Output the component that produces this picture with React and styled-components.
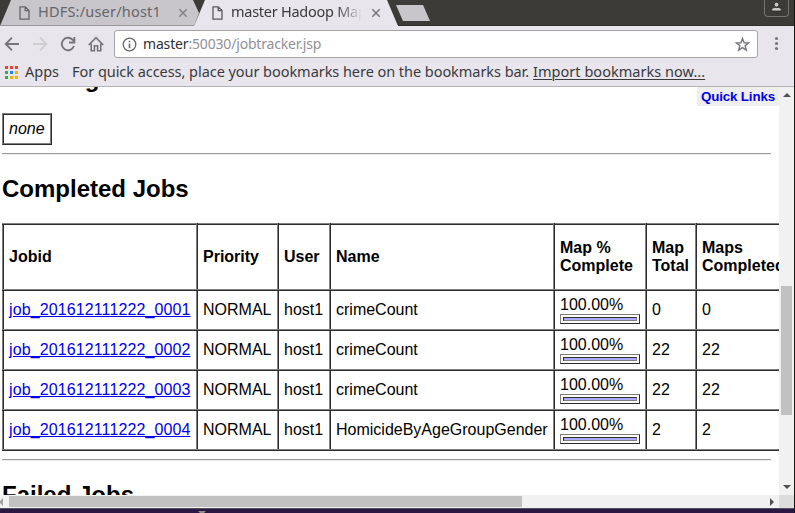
import React from 'react';
import styled, { createGlobalStyle } from 'styled-components';

const Global = createGlobalStyle`
  * { box-sizing: border-box; }
  html, body { margin: 0; height: 513px; overflow: hidden; background: #2a1745; }
  svg { flex: none; }
`;

const Window = styled.div`
  width: 795px;
  height: 513px;
  display: flex;
  flex-direction: column;
  overflow: hidden;
  border-right: 1px solid #16150f;
  font-family: 'Noto Sans', 'Open Sans', sans-serif;
  color: #3a3a3d;
`;

const TabStrip = styled.div`
  height: 26px;
  flex: none;
  display: flex;
  align-items: flex-start;
  background: #3c3b37;
  border-bottom: 1px solid #2f2e2a;
`;

const Tab = styled.div`
  height: 26px;
  flex: none;
  width: ${(p) => (p.$active ? 204 : 200)}px;
  margin-left: ${(p) => (p.$active ? -6 : 0)}px;
  padding-left: ${(p) => (p.$active ? 18 : 19)}px;
  display: flex;
  align-items: center;
  background: ${(p) => (p.$active ? '#e8e5ec' : '#c8c6cb')};
  border-bottom: 1px solid ${(p) => (p.$active ? '#e8e5ec' : '#99979c')};
  color: ${(p) => (p.$active ? '#3a3a3d' : '#66656a')};
  clip-path: ${(p) =>
    p.$active
      ? 'polygon(11px 0, 193px 0, 204px 26px, 0 26px)'
      : 'polygon(11px 0, 193px 0, 199px 13px, 194px 26px, 0 26px)'};
`;

const TabTitle = styled.span`
  width: ${(p) => (p.$fade ? 132 : 131)}px;
  margin-left: 8px;
  padding-bottom: 3px;
  flex: none;
  overflow: hidden;
  white-space: nowrap;
  font-size: 14.5px;
  line-height: 20px;
  letter-spacing: ${(p) => p.$spacing}px;
  mask-image: ${(p) => (p.$fade ? 'linear-gradient(90deg, #000 106px, transparent 131px)' : 'none')};
`;

const TabClose = styled.svg`
  margin-left: ${(p) => p.$gap}px;
`;

const NewTab = styled.div`
  width: 34px;
  height: 16px;
  margin: 5px 0 0 -2px;
  background: #c8c6cb;
  clip-path: polygon(0 0, 27px 0, 34px 16px, 7px 16px);
`;

const Profile = styled.div`
  width: 25px;
  height: 17px;
  margin-left: auto;
  margin-right: 5px;
  display: flex;
  justify-content: center;
  border: 1px solid #75736d;
  border-top: 0;
  border-radius: 0 0 4px 4px;
`;

const Toolbar = styled.div`
  height: 35px;
  flex: none;
  display: flex;
  align-items: center;
  padding-left: 4px;
  background: #e8e5ec;
`;

const NavIcon = styled.svg`
  width: 16px;
  height: 16px;
  margin-right: 12px;
  fill: none;
  stroke: ${(p) => (p.$off ? '#cfcdd2' : '#77757a')};
  stroke-width: 1.9;
`;

const AddressBar = styled.div`
  width: 644px;
  height: 28px;
  margin-left: -2px;
  margin-top: 1px;
  padding: 0 7px;
  display: flex;
  align-items: center;
  background: #fff;
  border: 1px solid #a5a3a8;
  border-radius: 3px;
`;

const Url = styled.span`
  margin-left: 6px;
  flex: 1;
  font-size: 14px;
  line-height: 20px;
  letter-spacing: -0.17px;
  color: #929095;
  b { font-weight: 400; color: #303033; }
`;

const MenuIcon = styled.svg`
  margin-left: 13px;
`;

const Bookmarks = styled.div`
  height: 26px;
  flex: none;
  display: flex;
  align-items: center;
  padding: 0 0 3px 5px;
  background: #e8e5ec;
  border-bottom: 1px solid #b5b3b8;
  font-size: 14.5px;
  line-height: 20px;
  white-space: nowrap;
`;

const BarText = styled.span`
  margin-left: ${(p) => p.$gap}px;
  padding-bottom: 2px;
  letter-spacing: ${(p) => p.$spacing}px;
`;

const ImportLink = styled(BarText)`
  text-decoration: underline;
  text-decoration-thickness: 1px;
  text-underline-offset: 2px;
`;

const Viewport = styled.div`
  height: 408px;
  flex: none;
  display: flex;
`;

const Page = styled.main`
  width: 779px;
  height: 408px;
  position: relative;
  overflow: hidden;
  padding-left: 2px;
  background: #fff;
  color: #000;
  font-family: 'Liberation Sans', Arial, sans-serif;
  font-size: 16px;
  line-height: 18px;
`;

const Heading = styled.h2`
  height: 28px;
  margin: ${(p) => p.$top}px 0 ${(p) => p.$bottom}px;
  font-size: 24px;
  line-height: 28px;
  font-weight: 700;
`;

const QuickLinks = styled.div`
  position: absolute;
  top: 0;
  right: 0;
  width: 82px;
  height: 19px;
  padding-left: 4px;
  background: #eee;
  color: #00e;
  font-size: 13.33px;
  font-weight: 700;
  letter-spacing: -0.15px;
  line-height: 19px;
`;

const EmptyBox = styled.div`
  width: 50px;
  height: 32px;
  padding: 5px;
  border: 2px ridge #808080;
  font-style: italic;
`;

const Rule = styled.hr`
  width: 769px;
  height: 2px;
  margin: ${(p) => p.$top}px 0 0;
  border: 0;
  border-top: 1px solid #9a9a9a;
  border-bottom: 1px solid #eee;
`;

const JobTable = styled.table`
  width: 787px;
  table-layout: fixed;
  border-collapse: collapse;
`;

const Col = styled.col`
  width: ${(p) => p.$w}px;
`;

const Cell = styled.td`
  height: 40px;
  padding: 0 5px;
  border: 2px ridge #808080;
  text-align: left;
  vertical-align: middle;
  white-space: nowrap;
`;

const HeadCell = styled(Cell).attrs({ as: 'th' })`
  height: 66px;
  white-space: pre-line;
`;

const JobLink = styled.a`
  color: #00e;
  letter-spacing: 0.11px;
  text-decoration: underline;
`;

const Meter = styled.div`
  width: 80px;
  height: 10px;
  padding: 2px;
  border: 1px solid;
  border-color: #808080 #2c2c2c #2c2c2c #808080;
`;

const MeterFill = styled.div`
  height: 4px;
  background: #aaf;
  border: 1px solid;
  border-color: #2c2c2c #808080 #808080 #2c2c2c;
`;

const VScroll = styled.div`
  width: 15px;
  height: 408px;
  display: flex;
  flex-direction: column;
  align-items: center;
  background: #f1f1f1;
`;

const VThumb = styled.div`
  width: 11px;
  height: 129px;
  margin-top: 186px;
  margin-bottom: auto;
  background: #c1c1c1;
`;

const HScroll = styled.div`
  height: 13px;
  flex: none;
  display: flex;
  align-items: center;
  background: #f1f1f1;
`;

const HThumb = styled.div`
  width: 513px;
  height: 11px;
  margin-left: 6px;
  margin-right: auto;
  background: #c1c1c1;
`;

const Corner = styled.div`
  width: 15px;
  height: 13px;
  margin-left: 4px;
  background: #dcdcdc;
`;

const Desktop = styled.div`
  flex: 1;
  padding-left: 198px;
  line-height: 0;
  background: #2a1745;
  border-top: 1px solid #55515c;
`;

const PageIcon = ({ color }) => (
  <svg width="11" height="14" viewBox="0 0 11 14" fill="none" stroke={color} strokeWidth="1.3">
    <path d="M1 .8h5.3L10 4.5v8.7H1zM6.2 1v3.7H10" />
  </svg>
);

const CloseIcon = ({ gap, color }) => (
  <TabClose $gap={gap} width="10" height="10" viewBox="0 0 10 10" fill="none" stroke={color} strokeWidth="1.5">
    <path d="M1.3 1.3l7.4 7.4M8.7 1.3L1.3 8.7" />
  </TabClose>
);

const appColors = ['#ea4335', '#ea4335', '#ea4335', '#34a853', '#1e88f5', '#f5b400', '#34a853', '#f5b400', '#f5b400'];
const AppsIcon = () => (
  <svg width="13" height="13" viewBox="0 0 13 13">
    {appColors.map((c, i) => (
      <rect key={i} x={(i % 3) * 5} y={Math.floor(i / 3) * 5} width="3" height="3" fill={c} />
    ))}
  </svg>
);

const Arrow = ({ d, w = 8, h = 8, color = '#505050' }) => (
  <svg width={w} height={h} viewBox={`0 0 ${w} ${h}`} fill={color}>
    <path d={d} />
  </svg>
);

const columns = [194, 81, 52, 224, 92, 50, 92];
const headers = ['Jobid', 'Priority', 'User', 'Name', 'Map %\nComplete', 'Map\nTotal', 'Maps\nCompleted'];
const jobs = [
  ['job_201612111222_0001', 'crimeCount', 0],
  ['job_201612111222_0002', 'crimeCount', 22],
  ['job_201612111222_0003', 'crimeCount', 22],
  ['job_201612111222_0004', 'HomicideByAgeGroupGender', 2],
];

const JobRow = ({ id, name, maps }) => (
  <tr>
    <Cell><JobLink>{id}</JobLink></Cell>
    <Cell>NORMAL</Cell>
    <Cell>host1</Cell>
    <Cell>{name}</Cell>
    <Cell>
      100.00%
      <Meter><MeterFill /></Meter>
    </Cell>
    <Cell>{maps}</Cell>
    <Cell>{maps}</Cell>
  </tr>
);

export default function App() {
  return (
    <>
      <Global />
      <Window>
        <TabStrip>
          <Tab>
            <PageIcon color="#66656a" />
            <TabTitle $spacing={0.2}>HDFS:/user/host1</TabTitle>
            <CloseIcon gap={9} color="#858388" />
          </Tab>
          <Tab $active>
            <PageIcon color="#5a595e" />
            <TabTitle $fade $spacing={-0.26}>master Hadoop Map/Reduce</TabTitle>
            <CloseIcon gap={8} color="#77757a" />
          </Tab>
          <NewTab />
          <Profile>
            <svg width="11" height="12" viewBox="0 0 11 12" fill="#c9c8c5" stroke="#1f1e1b" strokeWidth=".7">
              <circle cx="5.5" cy="4.7" r="2.4" />
              <path d="M.8 11V9.3Q1 7.5 3.6 7.5h3.8q2.6 0 2.8 1.8V11z" />
            </svg>
          </Profile>
        </TabStrip>
        <Toolbar>
          <NavIcon viewBox="0 0 16 16"><path d="M15 8H2M8 1.7L1.7 8 8 14.3" /></NavIcon>
          <NavIcon viewBox="0 0 16 16" $off><path d="M1 8h13M8 1.7L14.3 8 8 14.3" /></NavIcon>
          <NavIcon viewBox="0 0 16 16"><path d="M13.9 10A6.2 6.2 0 1 1 12.5 3.7L14 5.2M14.4 1v5.5H9" /></NavIcon>
          <NavIcon viewBox="0 0 16 16"><path d="M.7 9L8 1.7 15.3 9M3.2 7.5v7.2h3.2v-5h3.2v5h3.2V7.5" strokeWidth="1.6" /></NavIcon>
          <AddressBar>
            <svg width="15" height="15" viewBox="0 0 15 15" fill="none" stroke="#66646a" strokeWidth="1.3">
              <circle cx="7.5" cy="7.5" r="6.3" />
              <path d="M7.5 6.5v4.7M7.5 3.7v1.6" strokeWidth="1.6" />
            </svg>
            <Url><b>master</b>:50030/jobtracker.jsp</Url>
            <svg width="15" height="15" viewBox="0 0 15 15" fill="none" stroke="#77757a" strokeWidth="1.4">
              <path d="M7.5 1.6l1.6 4.2 4.5.2-3.5 2.8 1.2 4.3-3.8-2.4-3.8 2.4 1.2-4.3L1.4 6l4.5-.2z" />
            </svg>
          </AddressBar>
          <MenuIcon width="12" height="15" viewBox="0 0 12 15" fill="#77757a">
            <circle cx="5.5" cy="2.5" r="1.6" />
            <circle cx="5.5" cy="7.5" r="1.6" />
            <circle cx="5.5" cy="12.5" r="1.6" />
          </MenuIcon>
        </Toolbar>
        <Bookmarks>
          <AppsIcon />
          <BarText $gap={7} $spacing={0}>Apps</BarText>
          <BarText $gap={13} $spacing={-0.05}>For quick access, place your bookmarks here on the bookmarks bar.</BarText>
          <ImportLink $gap={4} $spacing={0.03}>Import bookmarks now...</ImportLink>
        </Bookmarks>
        <Viewport>
          <Page>
            <Heading $top={-22} $bottom={20}>Running Jobs</Heading>
            <EmptyBox>none</EmptyBox>
            <Rule $top={8} />
            <Heading $top={20} $bottom={20}>Completed Jobs</Heading>
            <JobTable>
              <colgroup>{columns.map((w, i) => <Col key={i} $w={w} />)}</colgroup>
              <thead>
                <tr>{headers.map((h) => <HeadCell key={h}>{h}</HeadCell>)}</tr>
              </thead>
              <tbody>
                {jobs.map(([id, name, maps]) => <JobRow key={id} id={id} name={name} maps={maps} />)}
              </tbody>
            </JobTable>
            <Rule $top={8} />
            <Heading $top={20} $bottom={0}>Failed Jobs</Heading>
            <QuickLinks>Quick Links</QuickLinks>
          </Page>
          <VScroll>
            <Arrow w={8} h={13} d="M0 10l4-4 4 4z" />
            <VThumb />
            <Arrow w={8} h={13} d="M0 3l4 4 4-4z" />
          </VScroll>
        </Viewport>
        <HScroll>
          <Arrow w={3} d="M3 0v8L-1 4z" color="#a3a3a3" />
          <HThumb />
          <Arrow w={5} d="M0 0l4 4-4 4z" />
          <Corner />
        </HScroll>
        <Desktop>
          <Arrow w={8} h={4} d="M0 0h8L4 4z" color="#8d8a86" />
        </Desktop>
      </Window>
    </>
  );
}
